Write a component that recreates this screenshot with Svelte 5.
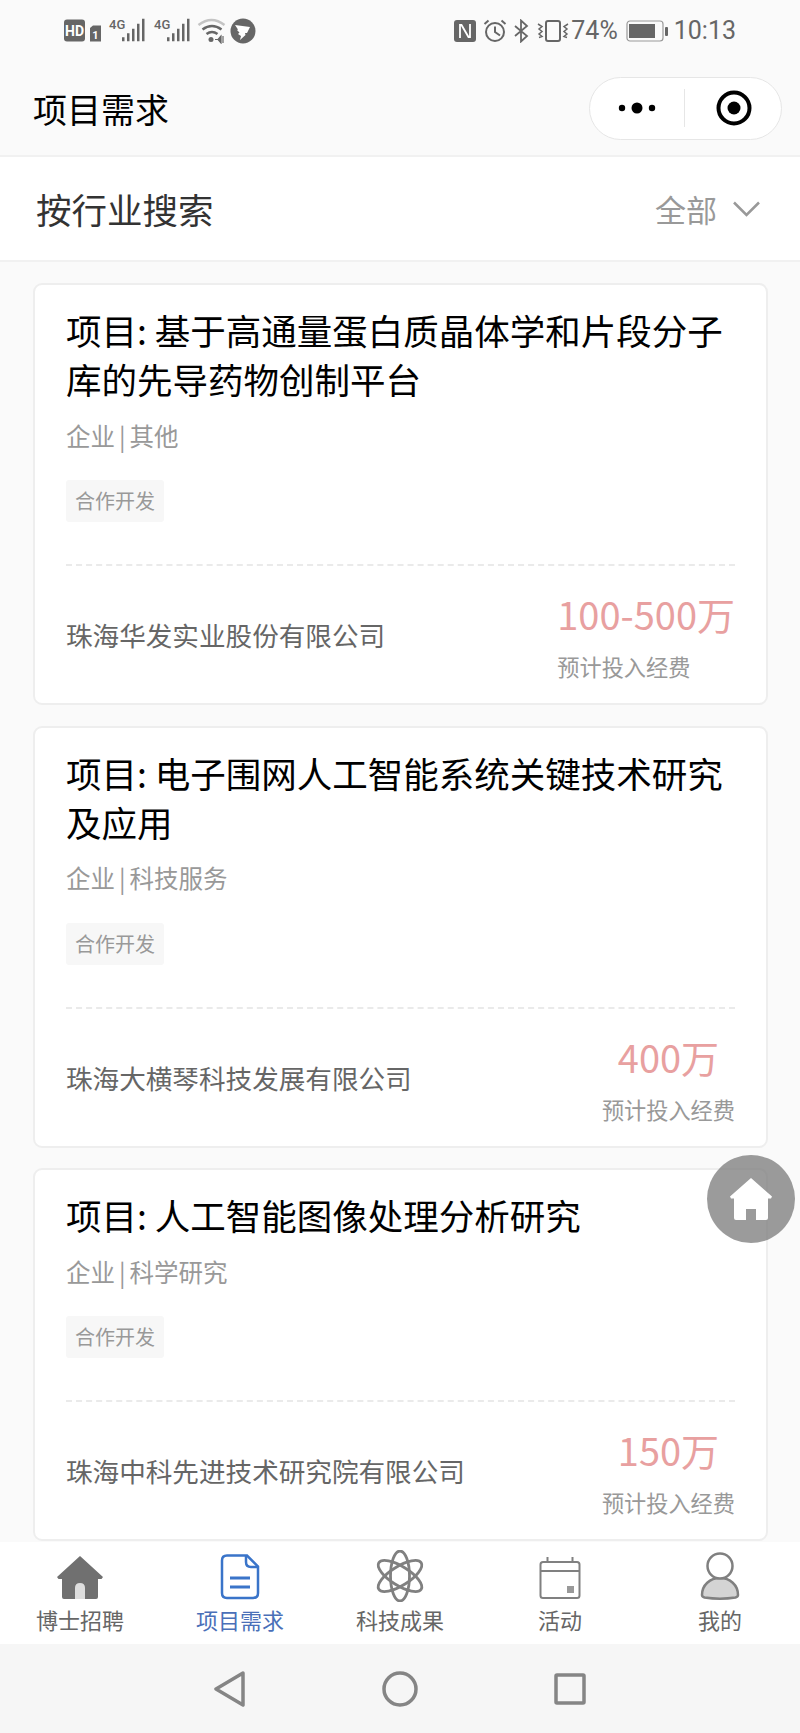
<script>
  const projects = [
    { title: '项目: 基于高通量蛋白质晶体学和片段分子库的先导药物创制平台', type: '企业', field: '其他', company: '珠海华发实业股份有限公司', money: '100-500万' },
    { title: '项目: 电子围网人工智能系统关键技术研究及应用', type: '企业', field: '科技服务', company: '珠海大横琴科技发展有限公司', money: '400万' },
    { title: '项目: 人工智能图像处理分析研究', type: '企业', field: '科学研究', company: '珠海中科先进技术研究院有限公司', money: '150万' }
  ];
</script>

<div class="page">
  <div class="status">
    <svg class="status-left" width="200" height="26" viewBox="0 0 200 26">
      <rect x="4" y="1.500" width="21" height="22" rx="3" fill="#666" />
      <text x="14.500" y="18" class="hd">HD</text>
      <path d="M30 10l3-2.500h8v16H30z" fill="#666" />
      <text x="35.500" y="21" class="sim">1</text>
      <text x="49" y="11" class="g4">4G</text>
      <path d="M62 19.200h2.500v4H62zM67 15.200h2.500v8H67zM72 10.800h2.500v12.400H72zM77 5.800h2.500v17.400H77zM82 .8h2.500v22.400H82z" fill="#666" />
      <text x="94" y="11" class="g4">4G</text>
      <path d="M107 19.200h2.500v4H107zM112 15.200h2.500v8H112zM117 10.800h2.500v12.400H117zM122 5.800h2.500v17.400H122zM127 .8h2.500v22.400H127z" fill="#666" />
      <path d="M138.500 7q13-10 26 0" fill="none" stroke="#c4c4c4" stroke-width="2.500" />
      <path d="M142.500 11.500q9.500-7 19 0M146.500 16q5.500-4 11 0" fill="none" stroke="#666" stroke-width="2.500" />
      <circle cx="151" cy="21.500" r="2.500" fill="#666" />
      <path d="M155 21.500h3M161 18l-3 3.500 3 3.500zM163 18v7" stroke="#666" stroke-width="1.200" fill="#666" />
      <circle cx="183" cy="13" r="12.500" fill="#666" />
      <path d="M175 7l15 2-3 6h-2l.5 2-5.500 5 1-4-3-2 1.500-1.500-2.500-2.500 1-.5z" fill="#fff" />
    </svg>
    <div class="status-right">
      <svg width="24" height="24" viewBox="0 0 24 24">
        <rect x="1" y="1" width="22" height="22" rx="3" fill="#666" />
        <path d="M7 19V6h1.500l7 12H17V5" stroke="#fff" stroke-width="1.800" fill="none" />
      </svg>
      <svg width="24" height="24" viewBox="0 0 24 24" fill="none" stroke="#666" stroke-width="2">
        <circle cx="12" cy="13" r="9" />
        <path d="M12 7.500V13l5 3.500M1.500 5l4-3.500M22.500 5l-4-3.500" />
      </svg>
      <svg width="16" height="24" viewBox="0 0 16 24" fill="none" stroke="#666" stroke-width="1.800">
        <path d="M2 7l12 10-6 5.500v-21l6 5.500L2 17" />
      </svg>
      <svg class="vib" width="32" height="24" viewBox="0 0 32 24" fill="none" stroke="#666" stroke-width="2">
        <rect x="9" y="2" width="14" height="20" rx="2" />
        <path d="M1 5l4 2.500-3 2.500 3 2.500-3 2.500 3 2.500-3 1M31 5l-4 2.500 3 2.500-3 2.500 3 2.500-3 2.500 3 1" stroke-width="1.500" />
      </svg>
      <span class="pct">74%</span>
      <svg class="batt" width="42" height="22" viewBox="0 0 42 22">
        <rect x="1" y="1" width="36" height="20" rx="3" fill="none" stroke="#999" stroke-width="1.200" />
        <rect x="3" y="4" width="26" height="14" fill="#666" />
        <rect x="39" y="7" width="3" height="9" rx="1" fill="#666" />
      </svg>
      <span class="time">10:13</span>
    </div>
  </div>

  <header>
    <h1>项目需求</h1>
    <div class="capsule">
      <div class="cap-part">
        <svg width="38" height="14" viewBox="0 0 38 14" fill="#000">
          <circle cx="4" cy="7" r="3.200" /><circle cx="19" cy="7" r="5.500" /><circle cx="34" cy="7" r="3.200" />
        </svg>
      </div>
      <i></i>
      <div class="cap-part ring">
        <svg width="36" height="36" viewBox="0 0 36 36">
          <circle cx="18" cy="18" r="15.500" fill="none" stroke="#000" stroke-width="4" />
          <circle cx="18" cy="18" r="6.500" fill="#000" />
        </svg>
      </div>
    </div>
  </header>

  <div class="filter">
    <span class="filter-label">按行业搜索</span>
    <span class="filter-value">
      全部
      <svg width="29" height="16" viewBox="0 0 28 16" fill="none" stroke="#999" stroke-width="2.500">
        <path d="M1.500 1.500L14 14 26.500 1.500" />
      </svg>
    </span>
  </div>

  <main>
    {#each projects as p}
      <section class="card">
        <h2>{p.title}</h2>
        <p class="meta">{p.type} | {p.field}</p>
        <span class="tag">合作开发</span>
        <div class="foot">
          <span class="company">{p.company}</span>
          <div class="budget">
            <strong>{p.money}</strong>
            <small>预计投入经费</small>
          </div>
        </div>
      </section>
    {/each}
    <button class="home" aria-label="首页">
      <svg width="44" height="44" viewBox="0 0 44 44" fill="#fff">
        <path d="M22 1L1 19.500l1 2h3V41q0 2 2 2h10V32h10v11h10q2 0 2-2V21.500h3l1-2z" />
      </svg>
    </button>
  </main>

  <nav>
    <div class="tab">
      <svg width="48" height="46" viewBox="0 0 48 46">
        <path d="M24 2L1 23l1.500 2H6v18q0 2 2 2h32q2 0 2-2V25h3.500l1.500-2z" fill="#707070" />
        <path d="M19 45V34q0-5 5-5t5 5v11z" fill="#ddd" />
      </svg>
      <span>博士招聘</span>
    </div>
    <div class="tab active">
      <svg width="40" height="46" viewBox="0 0 40 46" fill="none" stroke="#3a74c9" stroke-width="2.500">
        <path d="M7 1.500h20l11 11V39q0 5-5 5H7q-5 0-5-5V6.500q0-5 5-5z" />
        <path d="M26 2v6q0 5 5 5h6" />
        <path d="M10 24h20M10 33h20" stroke-width="3" />
      </svg>
      <span>项目需求</span>
    </div>
    <div class="tab">
      <svg class="atom" width="50" height="52" viewBox="0 0 50 52" fill="none" stroke="#808080" stroke-width="2.800">
        <ellipse cx="25" cy="26" rx="25" ry="9.500" transform="rotate(32 25 26)" />
        <ellipse cx="25" cy="26" rx="25" ry="9.500" transform="rotate(-32 25 26)" />
        <ellipse cx="25" cy="26" rx="9.500" ry="25" />
      </svg>
      <span>科技成果</span>
    </div>
    <div class="tab">
      <svg width="42" height="44" viewBox="0 0 42 44" fill="none" stroke="#808080" stroke-width="2">
        <rect x="1.500" y="6" width="39" height="36" rx="2.500" />
        <path d="M1.500 15h39M8.500 1v5M33.500 1v5" />
        <rect x="28" y="30" width="7" height="7" fill="#999" stroke="none" />
      </svg>
      <span>活动</span>
    </div>
    <div class="tab">
      <svg width="40" height="48" viewBox="0 0 40 48">
        <path d="M2 43c0-10 8-17 18-17s18 7 18 17c0 1-1 2-2.500 2.500-10 1.500-21 1.500-31 0C3 45 2 44 2 43z" fill="#d4d4d4" stroke="#808080" stroke-width="2.500" />
        <circle cx="20" cy="14" r="12.500" fill="#fff" stroke="#808080" stroke-width="2.500" />
      </svg>
      <span>我的</span>
    </div>
  </nav>

  <div class="sysnav">
    <svg width="32" height="36" viewBox="0 0 32 36" fill="none" stroke="#858585" stroke-width="3.500" stroke-linejoin="round">
      <path d="M29 2L2 18l27 16z" />
    </svg>
    <svg width="36" height="36" viewBox="0 0 36 36" fill="none" stroke="#858585" stroke-width="3.500">
      <circle cx="18" cy="18" r="16" />
    </svg>
    <svg width="32" height="32" viewBox="0 0 32 32" fill="none" stroke="#858585" stroke-width="3.500" stroke-linejoin="round">
      <rect x="2" y="2" width="28" height="28" rx="1" />
    </svg>
  </div>
</div>

<style>
  :global(body) {
    background: #fafafa;
    font-family: "Noto Sans CJK SC", "Noto Sans", sans-serif;
  }

  .page {
    width: 800px;
    height: 1733px;
    display: flex;
    flex-direction: column;
    overflow: hidden;
    background: #fafafa;
  }

  .status {
    height: 61px;
    display: flex;
    justify-content: space-between;
    align-items: center;
    padding: 0 64px 0 60px;
    color: #666;
  }

  .status-left {
    display: block;
  }

  .status-right {
    display: flex;
    align-items: center;
    gap: 6px;
    font-family: "Roboto", sans-serif;
    font-size: 25px;
  }

  .hd {
    font: 700 14px "Roboto", sans-serif;
    fill: #fff;
    text-anchor: middle;
  }

  .sim {
    font: 700 11px "Roboto", sans-serif;
    fill: #fff;
    text-anchor: middle;
  }

  .g4 {
    font: 500 13px "Roboto", sans-serif;
    fill: #666;
  }

  .vib {
    margin-left: 2px;
    margin-right: -4px;
  }

  .batt {
    margin-left: 2px;
  }

  header {
    height: 96px;
    padding: 0 18px 0 33px;
    box-sizing: border-box;
    display: flex;
    justify-content: space-between;
    align-items: center;
    border-bottom: 2px solid #f1f1f1;
  }

  h1 {
    margin: 0;
    font-size: 34px;
    font-weight: 400;
    color: #000;
  }

  .capsule {
    width: 193px;
    height: 63px;
    box-sizing: border-box;
    border: 1.500px solid #e6e6e6;
    border-radius: 32px;
    background: #fff;
    display: flex;
    align-items: center;
  }

  .capsule i {
    width: 1px;
    height: 38px;
    background: #e6e6e6;
  }

  .cap-part {
    flex: 1;
    display: flex;
    justify-content: center;
    align-items: center;
  }

  .cap-part.ring {
    padding-left: 2px;
  }

  .filter {
    height: 105px;
    box-sizing: border-box;
    background: #fff;
    border-bottom: 2px solid #f1f1f1;
    padding: 0 39px 0 36px;
    display: flex;
    justify-content: space-between;
    align-items: center;
  }

  .filter-label {
    font-size: 35.500px;
    color: #333;
  }

  .filter-value {
    display: flex;
    align-items: center;
    gap: 15px;
    font-size: 31px;
    color: #999;
  }

  main {
    flex: 1;
    min-height: 0;
    position: relative;
    padding: 21px 32px 0 33px;
    display: flex;
    flex-direction: column;
    gap: 20.500px;
    overflow: hidden;
  }

  .card {
    flex-shrink: 0;
    box-sizing: border-box;
    background: #fff;
    border: 2px solid #eee;
    border-radius: 9px;
    padding: 20px 31px 21px;
  }

  h2 {
    margin: 0;
    font-size: 35.500px;
    line-height: 49px;
    font-weight: 400;
    color: #000;
  }

  .meta {
    margin: 14.500px 0 0;
    font-size: 24.500px;
    line-height: 36px;
    word-spacing: -1.500px;
    color: #999;
  }

  .tag {
    display: block;
    width: fit-content;
    margin-top: 26.500px;
    padding: 0 9px;
    font-size: 20px;
    line-height: 42px;
    color: #999;
    background: #f7f7f7;
    border-radius: 3px;
  }

  .foot {
    margin-top: 42px;
    padding-top: 23px;
    border-top: 2px dashed #eaeaea;
    display: flex;
    justify-content: space-between;
    align-items: flex-end;
  }

  .company {
    font-size: 26.600px;
    line-height: 40px;
    color: #666;
    margin-bottom: 27px;
  }

  .budget {
    display: flex;
    flex-direction: column;
    align-items: flex-start;
  }

  .budget strong {
    align-self: center;
    font-size: 38px;
    line-height: 50px;
    font-weight: 400;
    color: #e8a0a0;
  }

  .budget small {
    margin-top: 11px;
    font-size: 22.200px;
    line-height: 32px;
    color: #999;
  }

  .home {
    position: absolute;
    left: 707px;
    top: 893px;
    width: 88px;
    height: 88px;
    padding: 0;
    border: 0;
    border-radius: 50%;
    background: rgba(122, 122, 122, 0.75);
    display: flex;
    justify-content: center;
    align-items: center;
  }

  nav {
    height: 102px;
    flex-shrink: 0;
    background: #fff;
    display: grid;
    grid-template-columns: repeat(5, 160px);
  }

  .tab {
    display: flex;
    flex-direction: column;
    align-items: center;
    justify-content: flex-end;
    padding-bottom: 9px;
    box-sizing: border-box;
    font-size: 22px;
    line-height: 32px;
    color: #666;
    gap: 3px;
  }

  .tab.active {
    color: #4a6fb8;
  }

  .atom {
    margin-bottom: -2px;
  }

  .sysnav {
    height: 89px;
    flex-shrink: 0;
    background: #f6f6f6;
    display: flex;
    justify-content: center;
    align-items: center;
    gap: 136px;
  }
</style>
